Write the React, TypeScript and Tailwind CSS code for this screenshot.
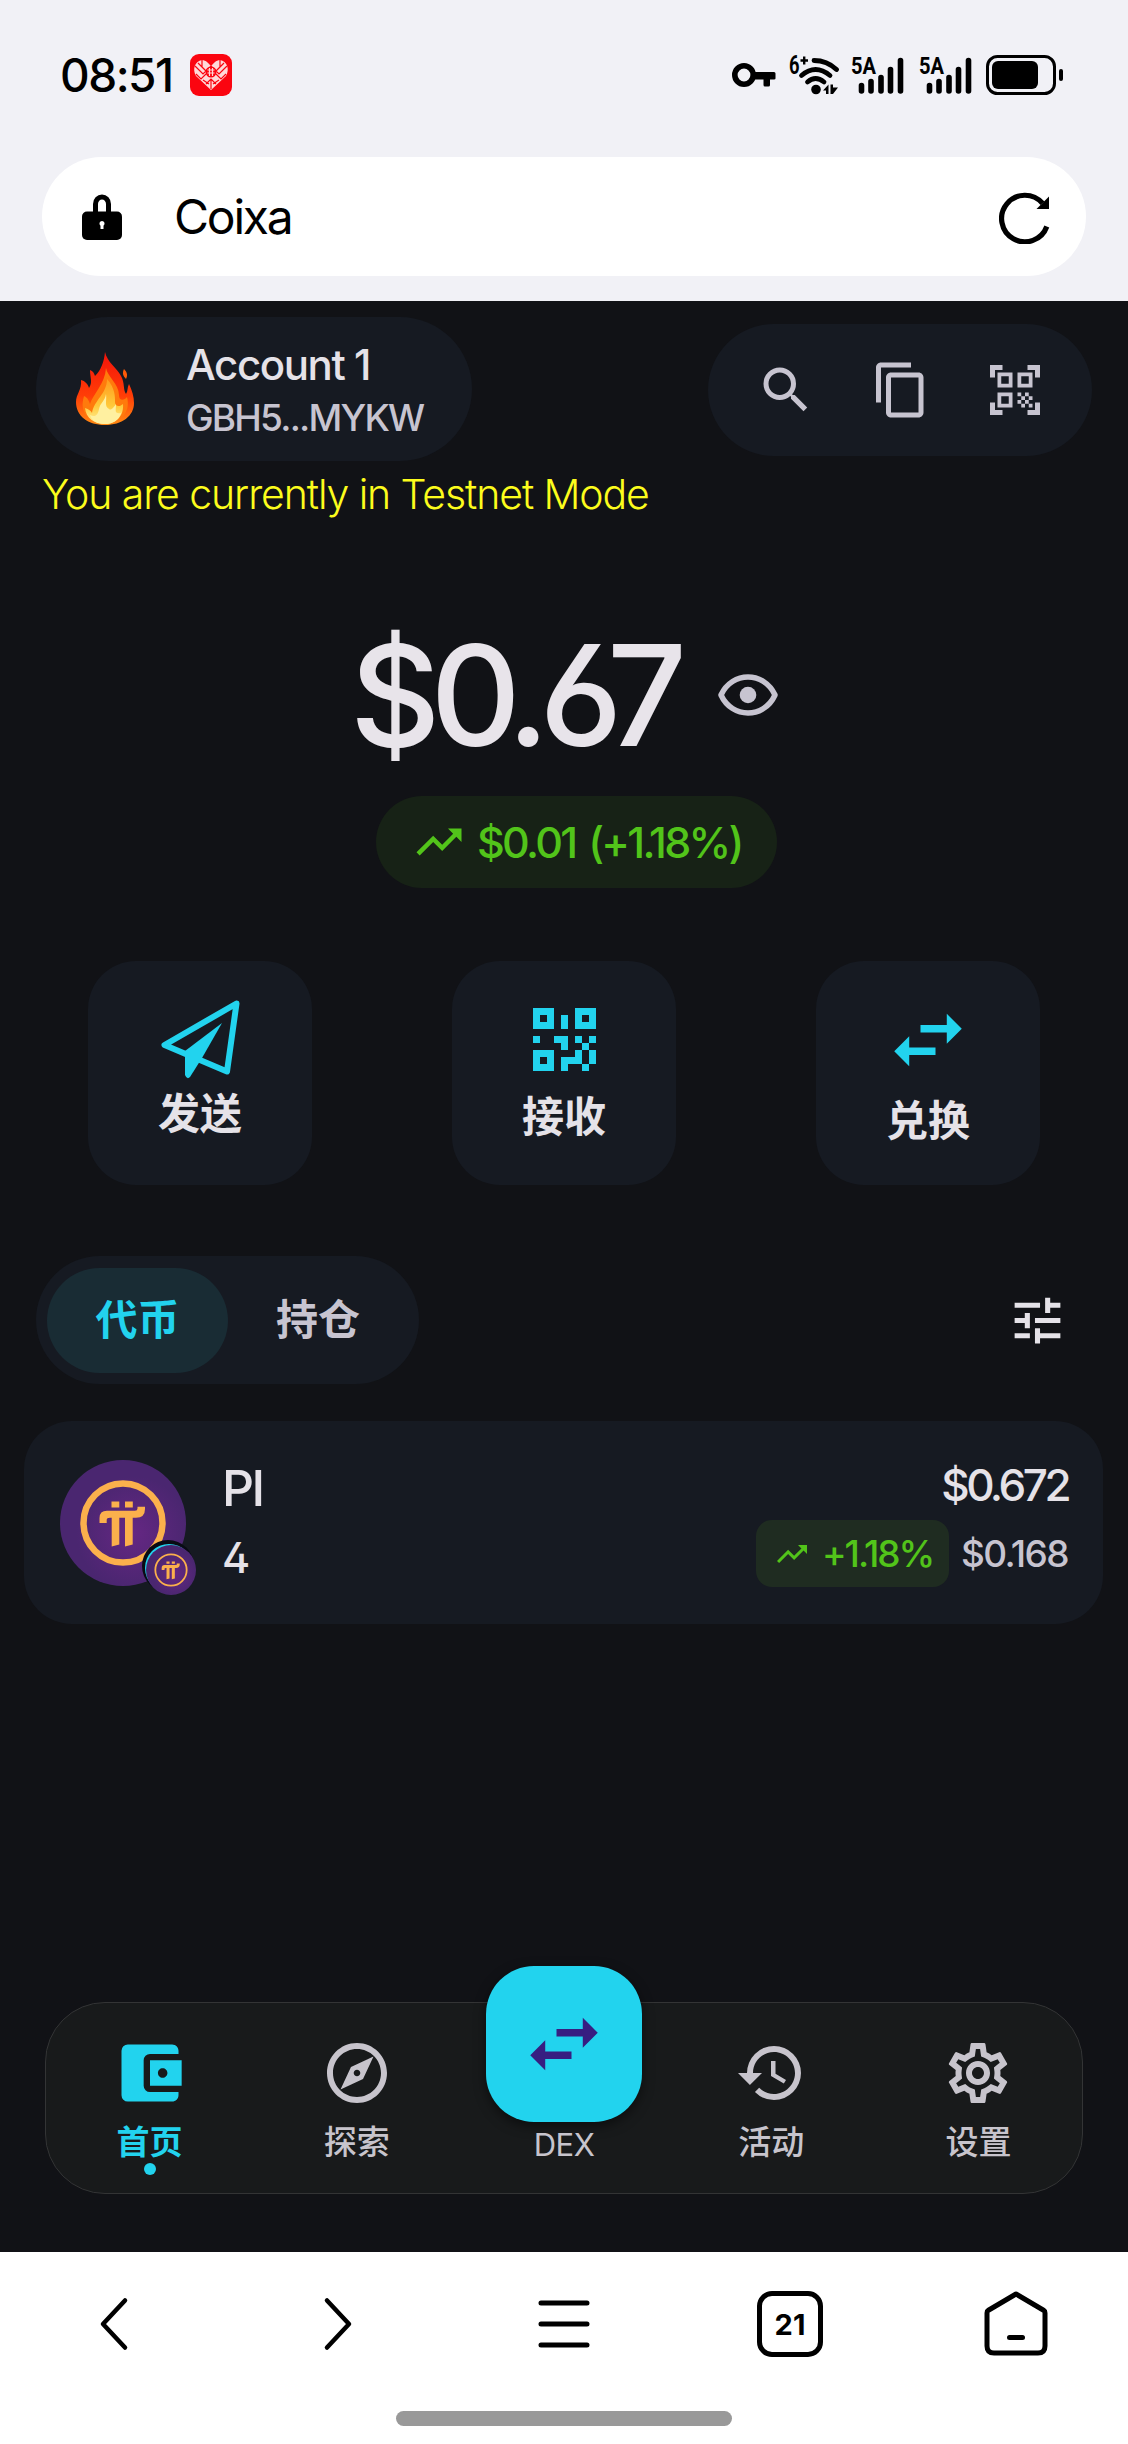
import React from 'react';
import {
  MdAccountBalanceWallet,
  MdContentCopy,
  MdHistory,
  MdOutlineExplore,
  MdOutlineSettings,
  MdQrCodeScanner,
  MdSearch,
  MdSwapHoriz,
  MdTrendingUp,
  MdTune,
} from 'react-icons/md';

const Signal: React.FC = () => (
  <svg width="54" height="56" viewBox="0 -8 54 56">
    <text x="0" y="19" fontFamily="Roboto, sans-serif" fontSize="24" fontWeight="700" textLength="25" lengthAdjust="spacingAndGlyphs">5A</text>
    <g stroke="#000" strokeWidth="5.6" strokeLinecap="round">
      <path d="M10.5 30.5v5.5M20 26.5v9.5M30 22.5v13.5M39.5 14.5v21.5M49.5 5.5v30.5" />
    </g>
  </svg>
);

const StatusBar: React.FC = () => (
  <div className="flex h-[150px] items-center pl-[60px] pr-[64px] text-black">
    <span className="w-[130px] text-[46px] font-medium leading-[60px] tracking-[-1.5px]">08:51</span>
    <svg width="42" height="42" viewBox="0 0 42 42">
      <rect width="42" height="42" rx="9" fill="#fb0510" />
      <path d="M21 36L6 22C2 15 5 7 12 6c4 0 7 4 9 6 2-2 5-6 9-6 7 1 10 9 6 16z" fill="#ffd9d9" />
      <g stroke="#fb0510" strokeWidth="1.2" fill="none">
        <path d="M5 12l8 8 8-8 8 8 8-8M6 20l5 5 5-5M26 20l5 5 5-5M12 6v8M30 6v8M8 9l8 8M34 9l-8 8M16 30l5-5 5 5M21 25v10M13 26l6 4M29 26l-6 4" />
      </g>
      <circle cx="21" cy="18" r="5.5" fill="#fb0510" />
      <path d="M17.5 16h7M17.5 19h7M19.5 14v8M22.5 14v8" stroke="#ffd9d9" strokeWidth="1.2" />
    </svg>
    <div className="ml-auto flex items-center">
      <svg width="44" height="26" viewBox="0 0 44 26">
        <circle cx="12" cy="13" r="9.2" fill="none" stroke="#000" strokeWidth="5.6" />
        <path d="M22 10h20q1.5 0 1.5 1.5v5q0 1-1.5 1H38V23q0 1.5-1.5 1.5H33Q31.5 24.5 31.5 23V17.5H22z" />
      </svg>
      <svg className="ml-[13px]" width="50" height="58" viewBox="0 -8 50 58">
        <text x="0" y="20" fontFamily="Roboto, sans-serif" fontSize="25" fontWeight="700" textLength="10.5" lengthAdjust="spacingAndGlyphs">6</text>
        <path d="M11.5 6.500h7.500M15.2 2.500v8" stroke="#000" strokeWidth="2.4" />
        <g fill="none" stroke="#000" strokeWidth="4.8" strokeLinecap="round">
          <path d="M25 6.500Q38 6.500 47.500 15.500" />
          <path d="M12.500 21.500Q26.500 9.500 41 21.500" />
          <path d="M18.500 28Q26.500 21 35 28" />
        </g>
        <circle cx="27" cy="35.5" r="4.8" />
        <path d="M34 36.500l5.500-6v9.500h-2.500v-3.500zM41.500 30.500h2.500v3h5l-5 6.500h-2.500z" />
      </svg>
      <div className="ml-[12px]"><Signal /></div>
      <div className="ml-[14px]"><Signal /></div>
      <svg className="ml-[13px]" width="78" height="40" viewBox="0 0 78 40">
        <rect x="1.500" y="1.500" width="67" height="37" rx="10" fill="none" stroke="#000" strokeWidth="3" />
        <rect x="6" y="6" width="46" height="28" rx="6" />
        <rect x="73" y="14" width="4" height="12" rx="2" />
      </svg>
    </div>
  </div>
);

const AddressBar: React.FC = () => (
  <div className="mx-[42px] mt-[7px] flex h-[119px] items-center rounded-full bg-white pl-10 pr-9">
    <svg width="40" height="46" viewBox="0 0 40 46">
      <path d="M13.5 20V10a6.5 7 0 0 1 13 0V20" fill="none" stroke="#000" strokeWidth="5" />
      <rect y="17.5" width="40" height="28.5" rx="5" />
      <path d="M20 27a2.6 2.6 0 0 1 1.5 4.7V35h-3v-3.3A2.6 2.6 0 0 1 20 27z" fill="#fff" />
    </svg>
    <span className="ml-[52px] mt-px text-[48px] leading-[60px] tracking-[-2.2px] text-black">Coixa</span>
    <svg className="ml-auto mt-0.5" width="51" height="52" viewBox="0 0 51 52">
      <path d="M43.5 11.3A23.3 23.3 0 1 0 47.8 34.5" fill="none" stroke="#000" strokeWidth="5.2" />
      <path d="M50 4.5v12.5H37.5z" />
    </svg>
  </div>
);

const Flame: React.FC = () => (
  <svg width="58" height="74" viewBox="0 0 58 74">
    <defs>
      <linearGradient id="fire" x1="0" y1="0" x2="0" y2="1">
        <stop offset="0" stopColor="#f3120a" />
        <stop offset="0.6" stopColor="#ff3d07" />
        <stop offset="1" stopColor="#ff8a12" />
      </linearGradient>
      <linearGradient id="core" x1="0" y1="0" x2="0" y2="1">
        <stop offset="0" stopColor="#ff9a1c" />
        <stop offset="0.6" stopColor="#ffc93a" />
        <stop offset="1" stopColor="#fff3a0" />
      </linearGradient>
    </defs>
    <path d="M29 0C31 10 41 16 45 24c4 7 2 14 5 18 2-3 1-6 3-10 3 6 5 13 5 19 0 13-12 22-29 22S0 64 0 50C0 42 6 38 5 28c4 1 7 4 8 8 4-6 1-10 1-18 3 1 4 3 5 6C25 18 28 10 29 0z" fill="url(#fire)" />
    <path d="M30 16c1 8 13 16 13 27 0 6 5 6 8 2 4 15-6 26-22 26C12 71 3 60 8 44c4 2 5 5 6 8 3-10 15-20 16-36z" fill="#ff7a0c" />
    <path d="M31 27c8 9 8 17 8 23 0 5 5 5 8 2 1 12-7 20-18 20S10 66 9 56c4 1 6 3 7 5 2-13 15-19 15-34z" fill="url(#core)" />
    <path d="M30 42c1 7-2 12 3 15 2 2 5-2 7-5 0 7-2 10 5 9-2 7-8 11-16 11s-14-4-15-9c6 3 8-1 9-6 1-6 6-8 7-15z" fill="#fff0a0" />
    <path d="M48 17c3 3 4 6 2 10-3-3-4-6-2-10z" fill="#ff5a08" />
  </svg>
);

const TopBar: React.FC = () => (
  <div className="flex items-center justify-between px-9 pt-4">
    <div className="flex h-36 w-[436px] items-center rounded-full bg-[#161a22] pl-10">
      <Flame />
      <div className="ml-[52px] pt-1">
        <div className="text-[42px] font-medium leading-[53px] tracking-[-1.4px] text-[#e5e2e8]">Account 1</div>
        <div className="text-[37px] font-medium leading-[54px] tracking-[-1.8px] text-[#c7c4d0]">GBH5...MYKW</div>
      </div>
    </div>
    <div className="mt-0.5 flex h-[132px] w-[384px] items-center justify-between rounded-full bg-[#161a22] pl-[48px] pr-[47px] text-[#c7c4d0]">
      <MdSearch size={60} />
      <MdContentCopy size={60} />
      <MdQrCodeScanner size={60} />
    </div>
  </div>
);

const Balance: React.FC = () => (
  <div>
    <div className="mt-[101px] flex h-[140px] items-center pl-[350px]">
      <span className="w-[368px] text-[140px] font-medium leading-[140px] tracking-[-10px] text-[#e8e4ea] [font-feature-settings:'cv03']">$0.67</span>
      <svg width="60" height="42" viewBox="0 0 60 42" fill="none">
        <path d="M3 21C14-3 46-3 57 21C46 45 14 45 3 21z" stroke="#c7c4d0" strokeWidth="5.5" strokeLinejoin="round" />
        <circle cx="30" cy="21" r="8.3" fill="#c7c4d0" />
      </svg>
    </div>
    <div className="ml-[376px] mt-[31px] flex h-[92px] w-[401px] items-center rounded-full bg-[#172216] pl-9 text-[#52c41a]">
      <MdTrendingUp size={54} />
      <span className="ml-[11px] whitespace-nowrap text-[43px] font-medium leading-[60px] tracking-[-2.7px] [word-spacing:4px]">$0.01 (+1.18%)</span>
    </div>
  </div>
);

const QrIcon: React.FC = () => (
  <svg width="63" height="63" viewBox="0 0 9 9" fill="#22d3ee" fillRule="evenodd" shapeRendering="crispEdges">
    <path d="M0 0h3v3H0zM1 1v1h1V1zM6 0h3v3H6zM7 1v1h1V1zM0 6h3v3H0zM1 7v1h1V7z" />
    <path d="M4 1h1v2H4zM0 4h1v1H0zM3 4h2v2H4V5H3zM6 4h1v1H6zM8 4h1v1H8zM7 5h1v1H7zM6 6h1v2H5v1H4V7h2zM8 6h1v2H8zM7 8h1v1H7z" />
  </svg>
);

const PlaneIcon: React.FC = () => (
  <svg width="79" height="79" viewBox="0 0 79 79">
    <path d="M75.5 3.5L3.5 45L66 71.5z" fill="none" stroke="#22d3ee" strokeWidth="6" strokeLinejoin="round" />
    <path d="M61 23L24 51V75q2 5 5 2L41 58z" fill="#22d3ee" />
  </svg>
);

const actionCard = 'flex h-56 w-56 flex-col items-center rounded-[48px] bg-[#161a22]';
const actionLabel = 'text-[42px] font-bold leading-[50px] text-[#e5e2e8]';

const Actions: React.FC = () => (
  <div className="mt-[73px] flex justify-between px-[88px]">
    <div className={`${actionCard} pt-[39px]`}>
      <PlaneIcon />
      <span className={`${actionLabel} mt-[10px]`}>发送</span>
    </div>
    <div className={`${actionCard} pt-[47px]`}>
      <QrIcon />
      <span className={`${actionLabel} mt-[21px]`}>接收</span>
    </div>
    <div className={`${actionCard} pt-[34px]`}>
      <MdSwapHoriz size={90} color="#22d3ee" />
      <span className={`${actionLabel} mt-[11px]`}>兑换</span>
    </div>
  </div>
);

const Tabs: React.FC = () => (
  <div className="mt-[71px] flex items-center justify-between pl-9 pr-[60px]">
    <div className="flex h-32 w-[383px] items-center rounded-full bg-[#161a22] pl-[11px] text-[42px] font-bold leading-[50px]">
      <div className="flex h-[105px] w-[181px] items-center justify-center rounded-full bg-[#192c34] text-[#22d3ee]">代币</div>
      <div className="ml-[48px] text-[#c7c4d0]">持仓</div>
    </div>
    <MdTune size={61} className="text-[#e5e2e8]" />
  </div>
);

const PiLogo: React.FC<{ size: number; ring: number }> = ({ size, ring }) => (
  <svg width={size} height={size} viewBox="0 0 126 126">
    <defs>
      <radialGradient id="pi" cx="0.58" cy="0.58" r="0.45">
        <stop offset="0" stopColor="#652783" />
        <stop offset="1" stopColor="#4a2670" />
      </radialGradient>
    </defs>
    <circle cx="63" cy="63" r="63" fill="url(#pi)" />
    <circle cx="63" cy="63" r="39.5" fill="none" stroke="#fbb04c" strokeWidth={ring} />
    <g fill="#fbb04c">
      <path d="M51.5 41.5h7.8v6h-7.800zM65 41.5h7.800v6H65z" />
      <path d="M39.5 63V58Q39.5 50.7 47 50.7H75Q77.5 50.7 77.5 48.5V46.7H85V49Q85 57.7 76 57.7H50Q46.7 57.7 46.7 60V63z" />
      <path d="M51.7 56h7.6v28.5l-7.600 2zM65 56h7.700v28.5l-7.700 2z" />
    </g>
  </svg>
);

const TokenRow: React.FC = () => (
  <div className="ml-6 mr-[25px] mt-[37px] flex h-[203px] rounded-[48px] bg-[#161a22] pl-9 pr-[35px]">
    <div className="relative mt-[39px] h-[126px] w-[126px]">
      <PiLogo size={126} ring={6.5} />
      <div className="absolute left-[82px] top-[80px] h-[52px] w-[52px] rounded-full bg-[#090b14]" />
      <div className="absolute left-[85px] top-[84px] h-[48px] w-[48px] rounded-full bg-[#22d3ee]" />
      <div className="absolute left-[86px] top-[85px]">
        <PiLogo size={50} ring={4.5} />
      </div>
    </div>
    <div className="ml-[36px] mt-[37px] text-[#e5e2e8]">
      <div className="text-[50px] font-medium leading-[60px] tracking-[-2.5px]">PI</div>
      <div className="mt-[9px] text-[43px] font-medium leading-[60px] [font-feature-settings:'cv02']">4</div>
    </div>
    <div className="ml-auto flex flex-col items-end">
      <div className="mt-[39px] text-[44px] font-medium leading-[50px] tracking-[-3.5px] text-[#e5e2e8]">$0.672</div>
      <div className="mt-[10px] flex items-center gap-[12px]">
        <div className="flex h-[67px] w-[193px] items-center rounded-2xl bg-[#1f2c21] pl-[18px] text-[#52c41a]">
          <MdTrendingUp size={36} />
          <span className="ml-[12px] text-[37px] font-medium leading-[50px] tracking-[-2px]">+1.18%</span>
        </div>
        <span className="text-[37px] font-medium leading-[50px] tracking-[-1.6px] text-[#c7c4d0]">$0.168</span>
      </div>
    </div>
  </div>
);

const navItem = 'flex flex-1 flex-col items-center pt-[34px] text-[33px] font-medium leading-10 text-[#c7c4cc]';

const BottomNav: React.FC = () => (
  <nav className="mx-[45px] mb-[58px] mt-auto flex h-48 rounded-[60px] border border-[#333435] bg-[#181a1b]">
    <div className="flex flex-1 flex-col items-center pt-[32px] text-[33px] font-bold leading-10 text-[#22d3ee]">
      <MdAccountBalanceWallet size={76} />
      <span className="mt-[11px]">首页</span>
      <span className="mt-px h-3 w-3 rounded-full bg-[#22d3ee]" />
    </div>
    <div className={navItem}>
      <MdOutlineExplore size={72} />
      <span className="mt-[13px]">探索</span>
    </div>
    <div className="flex flex-1 flex-col items-center text-[31px] leading-10 text-[#c7c4cc]">
      <div className="-mt-[37px] flex h-[156px] w-[156px] shrink-0 items-center justify-center rounded-[48px] bg-[#22d3ee] shadow-[0_4px_12px_rgba(0,0,0,0.5)]">
        <MdSwapHoriz size={90} color="#371e81" />
      </div>
      <span className="mt-[3px] tracking-[-0.5px]">DEX</span>
    </div>
    <div className={navItem}>
      <MdHistory size={72} />
      <span className="mt-[13px]">活动</span>
    </div>
    <div className={navItem}>
      <MdOutlineSettings size={72} />
      <span className="mt-[13px]">设置</span>
    </div>
  </nav>
);

const BrowserBar: React.FC = () => (
  <footer className="flex h-48 flex-col bg-white">
    <div className="flex h-36 items-center justify-between pl-[99px] pr-[80px]">
      <svg width="30" height="54" viewBox="0 0 30 54" fill="none" stroke="#000" strokeWidth="4.5" strokeLinecap="round" strokeLinejoin="round">
        <path d="M26 3.5L4 27L26 50.5" />
      </svg>
      <svg className="ml-[9px]" width="30" height="54" viewBox="0 0 30 54" fill="none" stroke="#000" strokeWidth="4.5" strokeLinecap="round" strokeLinejoin="round">
        <path d="M4 3.5L26 27L4 50.5" />
      </svg>
      <svg width="52" height="50" viewBox="0 0 52 50" stroke="#000" strokeWidth="5" strokeLinecap="round">
        <path d="M3 4h46M3 25h46M3 46h46" />
      </svg>
      <div className="-ml-[18px] flex h-[66px] w-[66px] items-center justify-center rounded-[15px] border-[5px] border-black text-[29px] font-bold leading-none text-black">21</div>
      <svg className="-ml-[24px]" width="64" height="66" viewBox="0 0 64 66" fill="none" stroke="#000" strokeWidth="5" strokeLinejoin="round">
        <path d="M32 3L60 19.5Q61 20 61 22V55q0 7-7 7H10q-7 0-7-7V22q0-2 1-2.5z" />
        <path d="M25.5 46.5h13" strokeLinecap="round" />
      </svg>
    </div>
    <div className="mx-auto mt-[15px] h-[15px] w-[336px] rounded-full bg-[#999999]" />
  </footer>
);

const App: React.FC = () => {
  return (
    <div className="flex h-[2444px] w-[1128px] flex-col overflow-hidden bg-[#111216] font-[Inter,'Noto_Sans_CJK_SC',sans-serif]">
      <header className="h-[301px] bg-[#f1f1f6]">
        <StatusBar />
        <AddressBar />
      </header>
      <main className="flex flex-1 flex-col">
        <TopBar />
        <p className="ml-[42px] mt-[3px] text-[41px] font-light leading-[60px] tracking-[-1.1px] text-[#fcfc1c]">You are currently in Testnet Mode</p>
        <Balance />
        <Actions />
        <Tabs />
        <TokenRow />
        <BottomNav />
      </main>
      <BrowserBar />
    </div>
  );
};

export default App;
